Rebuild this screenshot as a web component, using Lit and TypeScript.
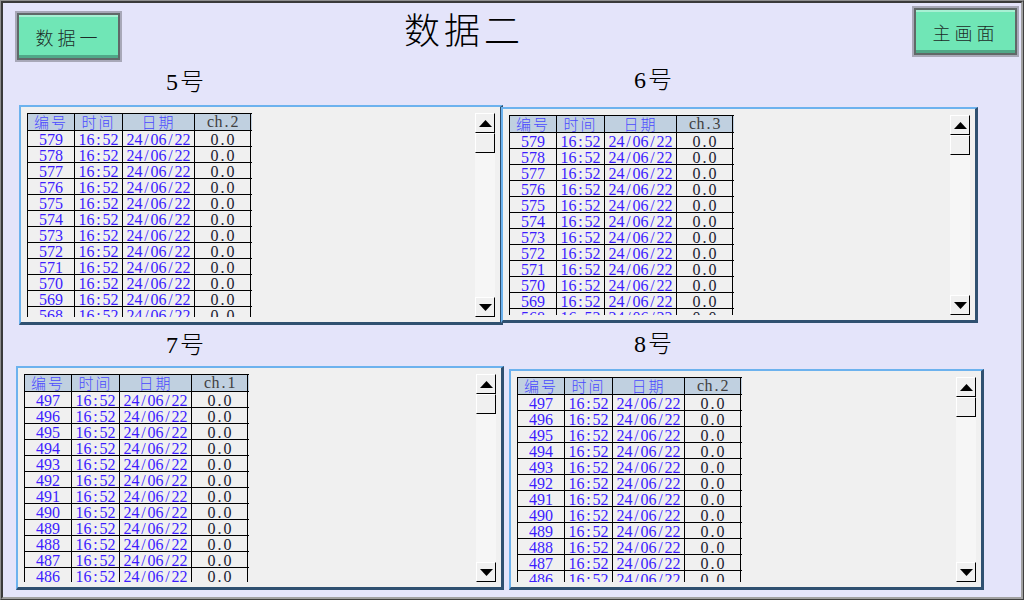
import { LitElement, html, css } from "lit";
import { customElement } from "lit/decorators.js";

interface Panel {
  id: string; title: string; ch: string; start: number; cls: string; titleCls: string;
}

const PANELS: Panel[] = [
  { id: "p5", title: "5号", ch: "ch.2", start: 579, cls: "p5", titleCls: "t5" },
  { id: "p6", title: "6号", ch: "ch.3", start: 579, cls: "p6", titleCls: "t6" },
  { id: "p7", title: "7号", ch: "ch.1", start: 497, cls: "p7", titleCls: "t7" },
  { id: "p8", title: "8号", ch: "ch.2", start: 497, cls: "p8", titleCls: "t8" },
];

const mono = (s: string) => [...s].map((c) => html`<span class="c">${c}</span>`);

@customElement("app-root")
export class AppRoot extends LitElement {
  static styles = css`
    :host { display: block; width: 1024px; height: 600px; }
    .screen {
      position: relative; width: 1024px; height: 600px; box-sizing: border-box;
      background: #e4e4fa;
      border: 3px solid; border-color: #3a3a3a #a0a0a0 #a0a0a0 #3a3a3a;
      font-family: "Liberation Serif", "Noto Sans CJK SC", serif;
    }
    .screen::after {
      content: ""; position: absolute; inset: -3px; border: 1px solid; border-color: #909090 #404040 #404040 #909090;
      pointer-events: none;
    }
    .btn {
      position: absolute; box-sizing: border-box; display: flex; align-items: center; justify-content: center;
      background: #70e6b6; color: #1c2c28; font-size: 18px; letter-spacing: 4px;
      font-family: "Noto Sans CJK SC", sans-serif; font-weight: 300;
      border: 2px solid #606868; box-shadow: 0 0 0 2px #a8a8b8;
    }
    .btn::before {
      content: ""; position: absolute; inset: 0; border-top: 2px solid #a8f0d4; border-bottom: 3px solid #50a888;
    }
    .b1 { left: 14px; top: 10px; width: 103px; height: 47px; }
    .b2 { left: 911px; top: 5px; width: 103px; height: 47px; }
    .heading {
      position: absolute; left: 401px; top: 3px; font-size: 36px; line-height: 44px; letter-spacing: 4px;
      font-family: "Noto Sans CJK SC", sans-serif; font-weight: 300; color: #000; white-space: nowrap;
    }
    .ptitle { position: absolute; font-size: 24px; line-height: 30px; color: #000; white-space: nowrap; letter-spacing: 2px; font-weight: 300; }
    .t5 { left: 163px; top: 64px; }
    .t6 { left: 631px; top: 62px; }
    .t7 { left: 163px; top: 327px; }
    .t8 { left: 631px; top: 326px; }
    .panel {
      position: absolute; box-sizing: border-box; background: #f0f0f0;
      border: 2px solid; border-color: #6cb2ee #2f5070 #2f5070 #6cb2ee;
      border-right-width: 3px; border-bottom-width: 3px;
      display: flex; justify-content: space-between; padding: 6px 5px 5px 6px;
    }
    .p5 { left: 16px; top: 102px; width: 484px; height: 220px; }
    .p6 { left: 498px; top: 104px; width: 477px; height: 216px; }
    .p7 { left: 13px; top: 363px; width: 488px; height: 224px; }
    .p8 { left: 506px; top: 366px; width: 475px; height: 221px; }
    .clip { overflow: hidden; width: 226px; }
    .row {
      display: grid; grid-template-columns: 47px 48px 72px 57px; height: 16px; box-sizing: border-box;
      border-bottom: 1px solid #000; width: 225px;
    }
    .row.head { height: 18px; background: #c0d0e0; border-top: 1px solid #000; }
    .cell {
      box-sizing: border-box; border-left: 1px solid #000; display: flex; align-items: center; justify-content: center;
      font-size: 16px; line-height: 15px; color: #3c1cff; white-space: nowrap; padding-top: 1px;
    }
    .cell:last-child { border-right: 1px solid #000; color: #1a1a30; }
    .head .cell { color: #4a4aff; font-size: 15px; letter-spacing: 2px; font-family: "Noto Sans CJK SC", sans-serif; font-weight: 300; padding: 0 0 2px; }
    .head .cell:last-child { color: #404040; font-family: "Liberation Serif", serif; font-size: 16px; font-weight: 400; letter-spacing: 0; }
    .c { display: inline-block; width: 8px; text-align: center; }
    .bar {
      width: 20px; background: #f6f6f6; display: flex; flex-direction: column; justify-content: space-between;
    }
    .sb {
      box-sizing: border-box; width: 20px; height: 20px; background: #f0f0f0;
      border: 1px solid; border-color: #fff #000 #000 #fff; display: flex; align-items: center; justify-content: center;
    }
    .sb svg { display: block; }
  `;

  private table(p: Panel) {
    const rows = Array.from({ length: 12 }, (_, i) => p.start - i);
    return html`
      <div class="clip">
        <div class="row head">
          <div class="cell">编号</div><div class="cell">时间</div><div class="cell">日期</div><div class="cell">${mono(p.ch)}</div>
        </div>
        ${rows.map((n) => html`
          <div class="row">
            <div class="cell">${n}</div>
            <div class="cell">${mono("16:52")}</div>
            <div class="cell">${mono("24/06/22")}</div>
            <div class="cell">${mono("0.0")}</div>
          </div>`)}
      </div>`;
  }

  private scrollbar() {
    return html`
      <div class="bar">
        <div class="top">
          <div class="sb"><svg width="13" height="7" viewBox="0 0 13 7"><path d="M6.5 0 13 7H0z" fill="#000"/></svg></div>
          <div class="sb"></div>
        </div>
        <div class="sb"><svg width="13" height="7" viewBox="0 0 13 7"><path d="M0 0H13L6.5 7z" fill="#000"/></svg></div>
      </div>`;
  }

  render() {
    return html`
      <div class="screen">
        <div class="btn b1">数据一</div>
        <div class="heading">数据二</div>
        <div class="btn b2">主画面</div>
        ${PANELS.map((p) => html`
          <div class="ptitle ${p.titleCls}">${p.title}</div>
          <div class="panel ${p.cls}">${this.table(p)}${this.scrollbar()}</div>`)}
      </div>`;
  }
}
